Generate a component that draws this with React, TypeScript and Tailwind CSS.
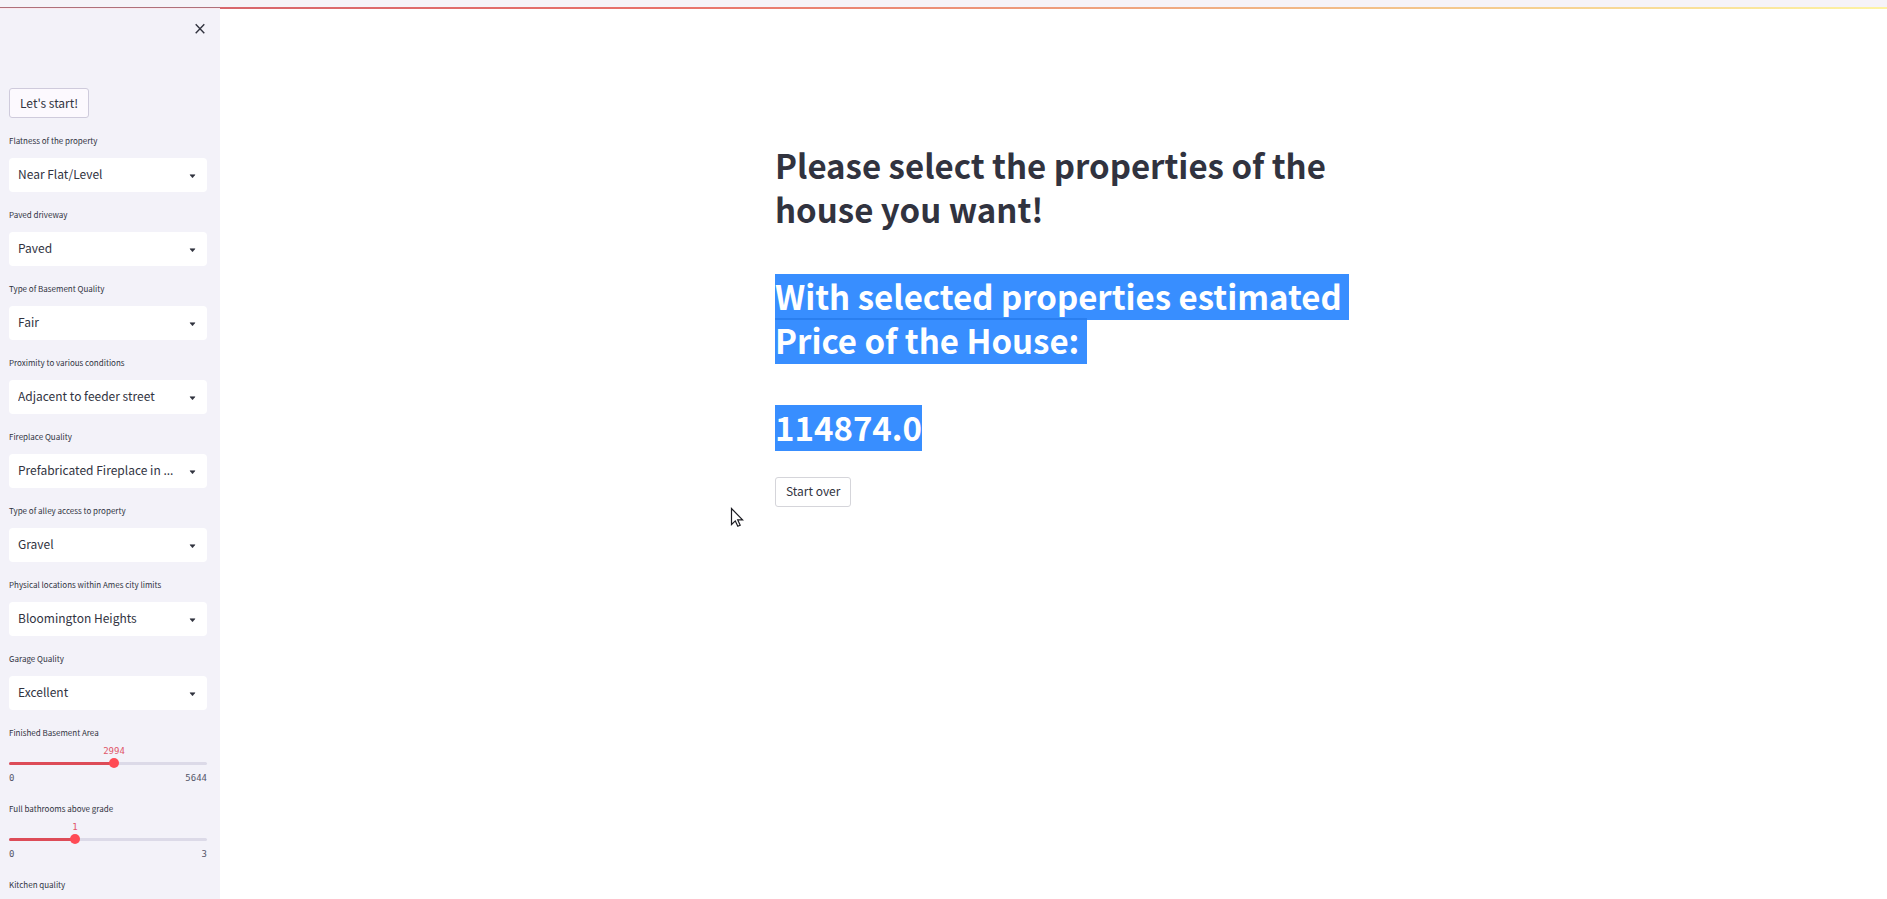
import { useState } from "react";

const SANS = "font-['Noto_Sans_CJK_SC',sans-serif]";
const MONO = "font-['DejaVu_Sans_Mono',monospace]";

const selects = [
  { id: "land", label: "Flatness of the property", value: "Near Flat/Level" },
  { id: "drive", label: "Paved driveway", value: "Paved" },
  { id: "basement", label: "Type of Basement Quality", value: "Fair" },
  { id: "condition", label: "Proximity to various conditions", value: "Adjacent to feeder street" },
  { id: "fireplace", label: "Fireplace Quality", value: "Prefabricated Fireplace in ..." },
  { id: "alley", label: "Type of alley access to property", value: "Gravel" },
  { id: "location", label: "Physical locations within Ames city limits", value: "Bloomington Heights" },
  { id: "garage", label: "Garage Quality", value: "Excellent" },
];

function SelectField({ id, label, value }: { id: string; label: string; value: string }) {
  return (
    <div className="flex flex-col pb-[14px]">
      <label htmlFor={id} className="h-[26px] text-[8px] leading-[18px]">
        {label}
      </label>
      <div className="grid items-center">
        <select
          id={id}
          defaultValue={value}
          className="col-start-1 row-start-1 h-[34px] w-full appearance-none truncate rounded-[4px] bg-white pr-[26px] pb-[2px] pl-[9px] text-[12px] outline-none"
        >
          <option>{value}</option>
        </select>
        <svg
          className="pointer-events-none col-start-1 row-start-1 mt-[2px] mr-[11px] justify-self-end"
          width="7"
          height="5"
          viewBox="0 0 7 5"
          aria-hidden="true"
        >
          <path d="M1 .8h5L3.500 3.800z" fill="#31333f" stroke="#31333f" strokeWidth=".6" strokeLinejoin="round" />
        </svg>
      </div>
    </div>
  );
}

function SliderField({ id, label, max, initial }: { id: string; label: string; max: number; initial: number }) {
  const [value, setValue] = useState(initial);
  const pct = `${(value / max) * 100}%`;
  return (
    <div className="flex h-[76px] flex-col">
      <label htmlFor={id} className="text-[8px] leading-[18px]">
        {label}
      </label>
      <div className="relative h-[16px]">
        <output
          htmlFor={id}
          className={`absolute -translate-x-1/2 text-[9px] leading-[18px] text-[#e0566a] ${MONO}`}
          style={{ left: pct }}
        >
          {value}
        </output>
      </div>
      <div className="grid h-[10px] items-center">
        <div className="col-start-1 row-start-1 h-[3px] overflow-hidden rounded-full bg-[#dcdae8]">
          <div className="h-full bg-[#dd4c58]" style={{ width: pct }} />
        </div>
        <input
          id={id}
          type="range"
          min={0}
          max={max}
          value={value}
          onChange={(e) => setValue(Number(e.target.value))}
          className="col-start-1 row-start-1 -mx-[5px] h-[10px] appearance-none bg-transparent outline-none [&::-webkit-slider-thumb]:size-[10px] [&::-webkit-slider-thumb]:appearance-none [&::-webkit-slider-thumb]:rounded-full [&::-webkit-slider-thumb]:bg-[#ff4b55]"
        />
      </div>
      <div className={`flex justify-between text-[9px] leading-[20px] text-[#55566a] ${MONO}`}>
        <span>0</span>
        <span>{max}</span>
      </div>
    </div>
  );
}

export default function App() {
  return (
    <div className={`flex h-screen flex-col overflow-hidden bg-white text-[#31333f] ${SANS}`}>
      <header className="h-[9px] shrink-0 border-b-2 border-transparent bg-[linear-gradient(#f6f3f8,#f6f3f8),linear-gradient(to_right,#b0707a_220px,#d8666c_220px,#e8716b_35%,#f3c48c_75%,#fdf3a4)] [background-clip:padding-box,border-box] [background-origin:padding-box,border-box]" />
      <div className="flex min-h-0 flex-1">
        <aside className="relative -mt-px flex w-[220px] shrink-0 flex-col overflow-hidden border-t border-[#fbe8ee] bg-[#f3f2f9] pr-[13px] pl-[9px]">
          <div className="flex h-[79px] shrink-0 justify-end pt-[14px] pr-px">
            <button aria-label="Close sidebar" className="size-[12px]">
              <svg width="12" height="12" viewBox="0 0 12 12" aria-hidden="true">
                <path d="M1.700 1.300 10.300 10.300M10.300 1.300 1.700 10.300" stroke="#31333f" strokeWidth="1.400" />
              </svg>
            </button>
          </div>
          <button className="mb-[14px] h-[30px] w-fit shrink-0 rounded-[3px] border border-[#cfcbdc] bg-[#fcf9fe] px-[10px] text-[12px] leading-[20px]">
            Let's start!
          </button>
          {selects.map((s) => (
            <SelectField key={s.id} {...s} />
          ))}
          <SliderField id="bsmt-area" label="Finished Basement Area" max={5644} initial={2994} />
          <SliderField id="baths" label="Full bathrooms above grade" max={3} initial={1} />
          <h2 className="text-[8px] leading-[18px]">Kitchen quality</h2>
        </aside>
        <main className="flex-1 pl-[27px]">
          <div className="mx-auto max-w-[584px] pt-[134px] text-[33px] leading-[44px] font-bold">
            <h1 className="mb-[43px]">Please select the properties of the house you want!</h1>
            <h1 className="mb-[41px] whitespace-pre text-white">
              <span className="block h-[46px] w-fit bg-[#388eff]">{"With selected properties estimated "}</span>
              <span className="-mt-[2px] block h-[46px] w-fit border-t-2 border-[#2a7ff0] bg-[#388eff] leading-[40px]">
                {"Price of the House: "}
              </span>
            </h1>
            <h1 className="mb-[26px] h-[46px] w-fit bg-[#388eff] text-white">114874.0</h1>
            <button className="block h-[30px] rounded-[3px] border border-[#d5d5da] bg-white px-[10px] pb-[2px] text-[12px] leading-[20px] font-normal">
              Start over
            </button>
          </div>
        </main>
      </div>
      <svg className="absolute top-[507px] left-[730px]" width="14" height="21" viewBox="0 0 14 21" aria-hidden="true">
        <path
          d="M1.500 1.500v16l3.800-3.600 2.500 5.400 2.400-1.100-2.500-5.300h4.900z"
          fill="#fff"
          stroke="#1c1c22"
          strokeWidth="1.200"
        />
      </svg>
    </div>
  );
}
